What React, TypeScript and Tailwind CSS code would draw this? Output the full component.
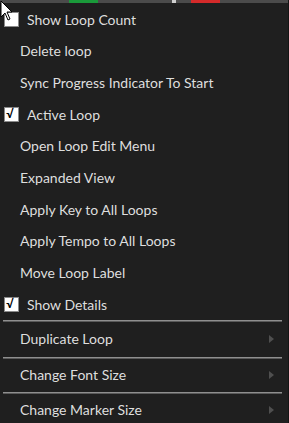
import React from 'react';

type Item = { label: string; check?: boolean };

const topItems: Item[] = [
  { label: 'Show Loop Count', check: false },
  { label: 'Delete loop' },
  { label: 'Sync Progress Indicator To Start' },
  { label: 'Active Loop', check: true },
  { label: 'Open Loop Edit Menu' },
  { label: 'Expanded View' },
  { label: 'Apply Key to All Loops' },
  { label: 'Apply Tempo to All Loops' },
  { label: 'Move Loop Label' },
  { label: 'Show Details', check: true },
];

const subItems = [
  { label: 'Duplicate Loop', h: 'h-[35px]' },
  { label: 'Change Font Size', h: 'h-[33px]' },
  { label: 'Change Marker Size', h: 'h-[32px]' },
];

function Checkbox({ checked }: { checked: boolean }) {
  return (
    <span className="w-[15px] h-[15px] bg-white border border-[#8a8a8a] flex items-center justify-center shrink-0">
      {checked && <span className="text-black text-[12px] leading-none font-bold -ml-[3px]">√</span>}
    </span>
  );
}

function Separator() {
  return <div className="mx-[3px] mr-[6px] h-[2px] bg-[#8f8f8f] border-b border-[#5a5a5a]" />;
}

function Arrow() {
  return (
    <svg width="5" height="8" viewBox="0 0 5 8" className="absolute right-[14px] top-1/2 -translate-y-1/2">
      <path d="M0 0 L5 4 L0 8 Z" fill="#4f4f4f" />
    </svg>
  );
}

export default function App() {
  return (
    <div
      className="relative w-[289px] h-[423px] bg-[#1f1f1f] overflow-hidden border-r border-[#141414] text-[#dedede] text-[14px]"
      style={{ fontFamily: 'Lato, "Noto Sans", sans-serif' }}
    >
      {/* top strip from the timeline behind the menu */}
      <div className="h-[3px] bg-[#4b4b4b] flex">
        <div className="w-[69px]" />
        <div className="w-[29px] bg-[#1a9a3a]" />
        <div className="w-[74px]" />
        <div className="w-[4px] bg-[#cfcfcf]" />
        <div className="w-[15px]" />
        <div className="w-[29px] bg-[#d42a2a]" />
      </div>

      {topItems.map((it) => (
        <div key={it.label} className="h-[31.67px] flex items-center pt-px">
          {it.check !== undefined ? (
            <div className="flex items-center pl-[4px] gap-[8px]">
              <Checkbox checked={it.check} />
              <span>{it.label}</span>
            </div>
          ) : (
            <span className="pl-[20px]">{it.label}</span>
          )}
        </div>
      ))}

      {subItems.map((it) => (
        <React.Fragment key={it.label}>
          <Separator />
          <div className={`relative ${it.h} flex items-center pl-[20px] pb-px`}>
            <span>{it.label}</span>
            <Arrow />
          </div>
        </React.Fragment>
      ))}

      {/* mouse pointer */}
      <svg width="14" height="22" viewBox="0 0 14 22" className="absolute left-0 top-0">
        <path d="M1 1 L1 17 L5 13 L8 20 L10 19 L7 12 L12 12 Z" fill="#ffffff" stroke="#000000" strokeWidth="1" />
      </svg>
    </div>
  );
}
